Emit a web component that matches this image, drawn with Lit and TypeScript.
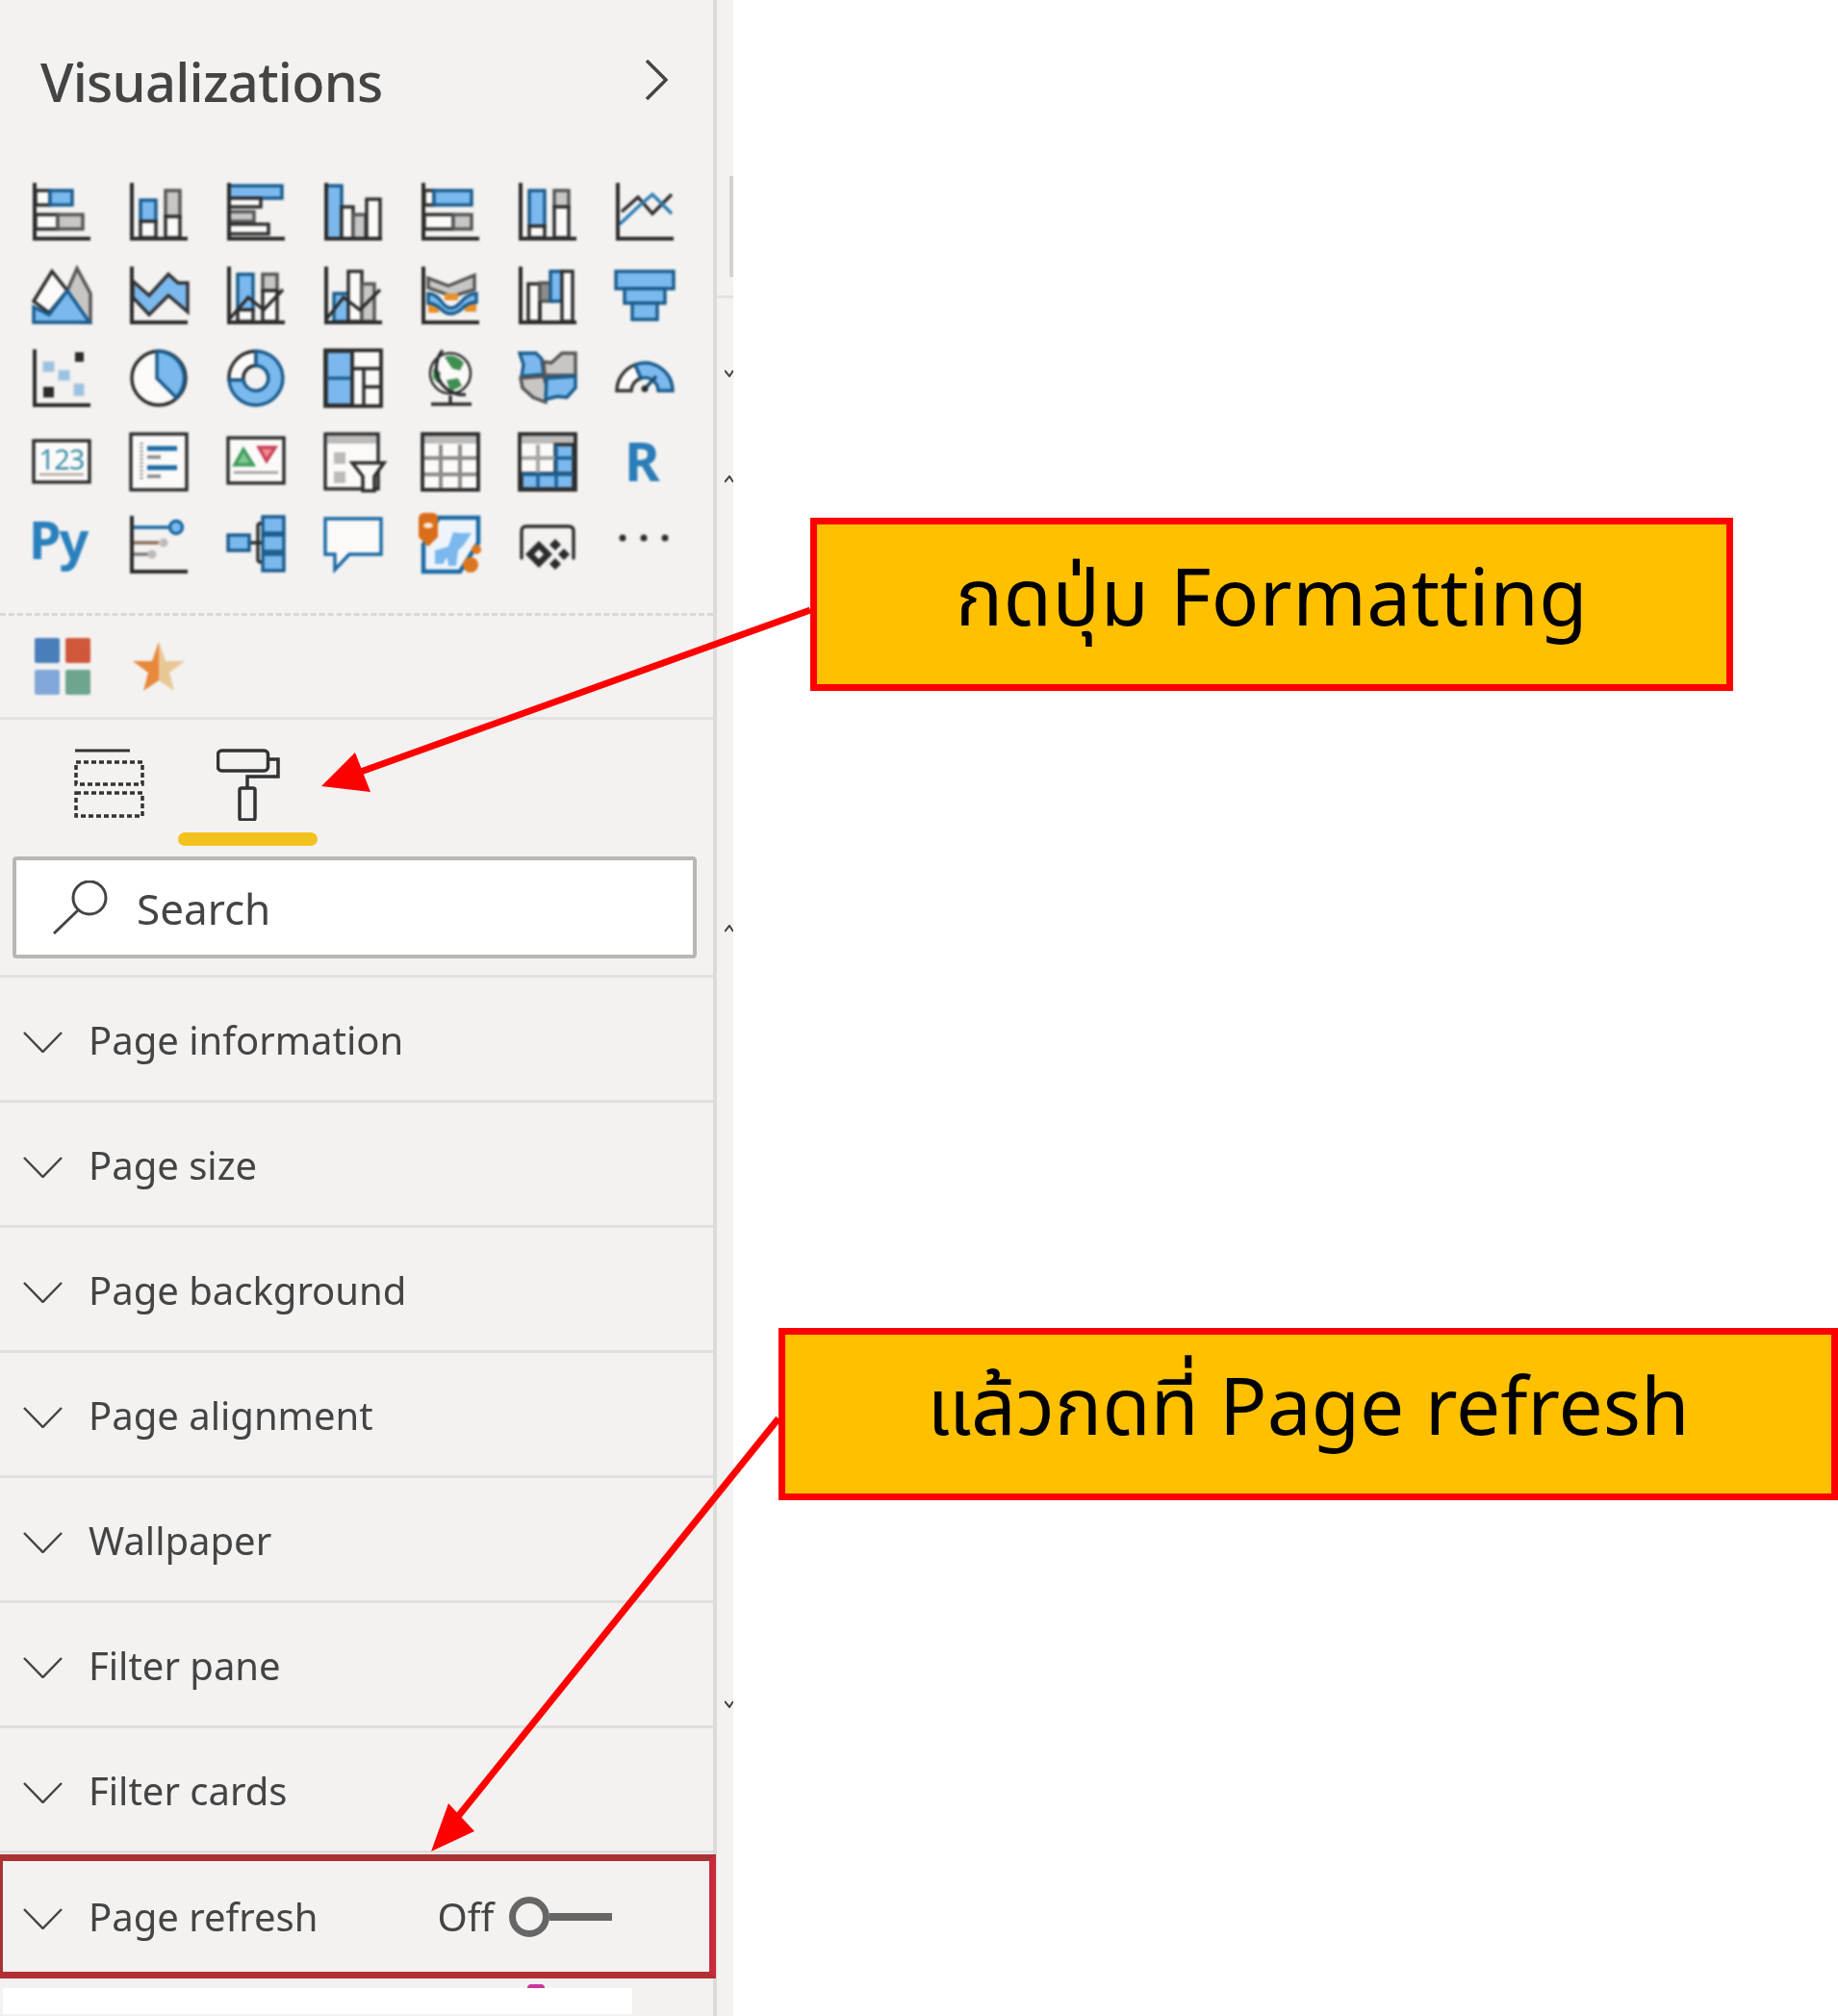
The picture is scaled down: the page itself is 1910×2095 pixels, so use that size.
import { LitElement, html, css, svg } from "lit";
import { customElement } from "lit/decorators.js";

const R = (x: number, y: number, w: number, h: number, c = "") => svg`<rect x=${x} y=${y} width=${w} height=${h} class=${c}></rect>`;
const AX = svg`<path class="ax" d="M2 0V58H60"></path>`;

const ICONS = [
  svg`${R(3,8,15,15,"w")}${R(18,8,23,15,"bd")}${R(3,33,23,15,"w")}${R(26,33,26,15,"g")}${AX}`,
  svg`${R(11,18,16,22,"bd")}${R(11,40,16,17,"w")}${R(37,8,15,27,"g")}${R(37,35,15,22,"w")}${AX}`,
  svg`${R(2,3,55,13,"bd")}${R(2,16,33,9,"w")}${R(2,30,26,10,"g")}${R(2,43,41,10,"w")}${AX}`,
  svg`${R(2,3,16,55,"bd")}${R(18,25,12,33,"w")}${R(30,33,13,25,"g")}${R(44,17,14,41,"w")}${AX}`,
  svg`${R(3,8,10,15,"w")}${R(13,8,39,15,"bd")}${R(3,33,30,15,"w")}${R(33,33,19,15,"g")}${AX}`,
  svg`${R(11,8,16,37,"bd")}${R(11,45,16,12,"w")}${R(37,8,15,17,"g")}${R(37,25,15,32,"w")}${AX}`,
  svg`<path class="ax2" d="M6 30L23 15L38 32L58 12"></path><path class="bl2" d="M4 43L23 25L38 12L58 32"></path>${AX}`,

  svg`<path class="g" d="M36 25L46 2L60 28V58H50Z"></path><path class="w" d="M1 36L20 5L36 25L17 48Z"></path><path class="bd" d="M1 42L17 50L36 25L59 58H1Z"></path>`,
  svg`<path class="b" stroke="#333" d="M3 15L20 30L40 8L50 17H60V47L40 30L20 50L3 32Z"></path>${AX}`,
  svg`${R(11,8,16,37,"bd")}${R(11,45,16,12,"w")}${R(37,8,15,17,"g")}${R(37,25,15,32,"w")}<path class="ax2" d="M2 55L22 32L38 45L58 24"></path>${AX}`,
  svg`${R(10,28,16,29,"bd")}${R(25,5,14,52,"w")}${R(39,18,13,39,"g")}<path class="ax2" d="M2 55L20 32L37 45L58 24"></path>${AX}`,
  svg`<path class="g" d="M7 12L28 20L55 9V24L32 31L7 22Z"></path><path fill="#e8902c" stroke="none" d="M7 37H18V48H7ZM45 38H57V47H45ZM24 28H38V35H24Z"></path><path class="bd" d="M7 28Q15 28 22 38Q30 48 40 38Q48 28 57 28V37Q48 37 42 44Q30 54 20 44Q14 38 7 38Z"></path>${AX}`,
  svg`${R(10,18,12,39,"w")}${R(22,17,14,19,"gd")}<path class="bd" d="M33 5H45V36H33Z"></path>${R(45,5,11,52,"w")}<path d="M22 36V57"></path>${AX}`,
  svg`${R(0,5,60,18,"bd")}${R(9,23,42,15,"bd")}${R(17,38,26,17,"bd")}`,

  svg`${R(44,3,9,10,"dk")}${R(11,13,11,10,"bf")}${R(27,22,11,10,"bf")}${R(11,39,11,11,"dk")}${R(43,36,10,12,"bf")}${AX}`,
  svg`<circle class="w" cx="30" cy="30" r="28"></circle><path class="bd" stroke="#333" d="M28 30V2A28 28 0 0 1 48 50Z"></path>`,
  svg`<path class="w" d="M2 32A28 28 0 0 1 30 2V17A13 13 0 0 0 17 32Z"></path><path class="bd" d="M30 2A28 28 0 1 1 2 32H17A13 13 0 1 0 30 17Z"></path>`,
  svg`${R(1,1,58,58,"w")}${R(2,2,27,56,"b")}<path stroke="#1f5f8f" d="M2 30H28"></path><path d="M29 2V58M29 20H58M41 20V58M41 39H58"></path>${R(1,1,58,58)}`,
  svg`<circle class="w" stroke-width="2.5" cx="30" cy="25" r="21"></circle><path fill="#3f8f52" stroke="none" d="M24 8Q34 3 44 14L40 22L32 20ZM12 20L20 24L18 36L12 30ZM26 32L38 30L42 38L30 44Z"></path><path d="M22 1A28 28 0 0 0 46 47M10 57H52M30 48V57"></path>`,
  svg`<path class="bd" d="M1 4H18L24 10L26 26L3 28L5 16Z"></path><path class="g" d="M26 13L34 14L45 4H59V27H27Z"></path><path class="g" d="M2 30L26 28L30 42L28 55L15 50L4 40Z"></path><path class="bd" d="M29 30L59 28V40L50 50L40 49L28 52Z"></path>`,
  svg`<path class="w" stroke="#333" d="M1 43A29 29 0 0 1 20 16L26 30A14 14 0 0 0 16 43Z"></path><path class="bd" d="M20 16A29 29 0 0 1 59 43H44A14 14 0 0 0 26 30Z"></path><path stroke="#1c4e70" d="M42 28L30 41"></path><circle class="dk" cx="30" cy="41" r="3.5"></circle>`,

  svg`${R(1,8,58,43,"w")}<text class="t123" x="30" y="38" text-anchor="middle">123</text><path stroke="#b3a8a0" stroke-width="2.5" d="M7 43H53"></path>`,
  svg`${R(1,1,58,58,"w")}<path stroke="#999" stroke-dasharray="2 2" d="M12 10V50"></path><path stroke="#1b6aa5" stroke-width="5" d="M18 16H49M18 36H49"></path><path stroke="#888" d="M18 25H32M18 45H32"></path>`,
  svg`${R(1,5,58,47,"w")}<path fill="#7fc98f" stroke="#3f9c5a" d="M8 33L17 17L27 33Z"></path><path fill="#f28b8b" stroke="#c9425a" d="M33 15H50L41 29Z"></path><path stroke="#999" stroke-width="2.5" d="M7 41H53"></path>`,
  svg`${R(1,1,55,57,"w")}${R(3,3,51,8,"gf")}${R(10,20,12,12,"gf")}${R(10,40,12,12,"gf")}<path class="w" stroke-width="3.5" d="M29 31H62L52 45V60H40V45Z"></path>`,
  svg`${R(1,1,58,58,"w")}${R(3,3,54,8,"gf")}<path stroke="#8f8d8b" stroke-width="4" d="M3 26H57M3 43H57M20 12V58M40 12V58"></path>${R(1,1,58,58)}`,
  svg`${R(1,1,58,58,"w")}${R(3,3,54,8,"gf")}${R(38,12,19,32,"b")}${R(3,42,54,16,"b")}<path stroke="#a9a7a5" stroke-width="4" d="M3 26H38M20 12V42"></path><path stroke="#1b5f92" d="M38 26H57M3 43H57M20 43V58M39 12V58"></path>${R(1,1,58,58)}`,
  svg`<text class="rtxt" x="9" y="50">R</text>`,

  svg`<text class="py" x="-4" y="45">Py</text>`,
  svg`<path stroke="#1b6aa5" d="M3 12H42"></path><circle class="b" stroke="#1b6aa5" cx="48" cy="12" r="6.5"></circle><path stroke="#8a6b55" d="M3 28H30"></path><circle class="gf" stroke="#8a7a70" cx="35" cy="28" r="4.5"></circle><path stroke="#777" d="M3 40H20"></path><circle class="gf" stroke="#777" cx="23" cy="40" r="4.5"></circle>${AX}`,
  svg`<path d="M22 28H32M32 8V48M32 8H38M32 28H38M32 48H38"></path>${R(1,20,22,16,"bd")}${R(37,1,22,17,"bd")}${R(37,20,22,17,"bd")}${R(37,40,22,17,"bd")}`,
  svg`<path fill="#fbfaf9" stroke="#1b6aa5" d="M1 3H59V40H26L11 56V40H1Z"></path>`,
  svg`<path fill="#eef4fa" stroke="#1b6aa5" stroke-width="4.5" d="M18 2H59V28L40 58H2V30Z"></path><path class="b" stroke="none" d="M33 17L40 18L52 18L44 30L38 36L36 52H28L27 44Q24 44 23 50H14V36L28 32Z"></path><path fill="#d96d1a" stroke="none" d="M-3 3Q-3 -3 3 -3H11Q17 -3 17 3V22L7 32L-3 22Z"></path><ellipse fill="#fbe6d6" stroke="none" cx="7" cy="10" rx="5" ry="3"></ellipse><circle fill="#d9761f" stroke="none" cx="57" cy="35" r="5"></circle><circle fill="#d9761f" stroke="none" cx="51" cy="51" r="8"></circle>`,
  svg`<path stroke-linecap="round" d="M3 44V16Q3 11 8 11H52Q57 11 57 16V44"></path><path class="dk" stroke="none" d="M21 26L35 40L21 54L7 40ZM38 24L44 30L38 36L32 30ZM47 34L53 40L47 46L41 40ZM38 44L44 50L38 56L32 50Z"></path><path fill="#f3f2f1" stroke="none" d="M21 35L26 40L21 45L16 40Z"></path>`,
  svg`<circle class="dk" stroke="none" cx="7" cy="23" r="3.5"></circle><circle class="dk" stroke="none" cx="29" cy="23" r="3.5"></circle><circle class="dk" stroke="none" cx="51" cy="23" r="3.5"></circle>`,
];

const ROWS = ["Page information", "Page size", "Page background", "Page alignment", "Wallpaper", "Filter pane", "Filter cards"];
const CHEV = html`<svg class="chev" viewBox="0 0 41 22"><path d="M1 1L20.5 21L40 1"></path></svg>`;

@customElement("app-root")
export class AppRoot extends LitElement {
  static styles = css`
    :host { display: block; width: 1910px; height: 2095px; position: relative; overflow: hidden; background: #fff; font-family: "Noto Sans", "Open Sans", sans-serif; color: #444; }
    .page { display: flex; height: 2095px; }
    .panel { width: 741px; flex: none; background: #f3f2f1; height: 2095px; }
    .divider { width: 4px; flex: none; background: #dddbd9; }
    .strip { width: 17px; flex: none; background: #f3f2f1; display: flex; flex-direction: column; align-items: flex-end; }
    .slider { width: 4px; height: 105px; margin-top: 183px; background: #d4d2d0; }
    .hr { width: 17px; height: 3px; margin-top: 19px; background: #e4e2e0; }
    .mini { width: 9px; height: 8px; fill: none; stroke: #444; stroke-width: 2; }
    .m1 { margin-top: 74px; } .m2 { margin-top: 102px; } .m3 { margin-top: 459px; } .m4 { margin-top: 798px; }

    .head { height: 190px; display: flex; align-items: center; justify-content: space-between; padding: 0 47px 22px 42px; box-sizing: border-box; }
    .title { font-size: 56px; font-weight: 500; letter-spacing: -0.75px; color: #444; filter: blur(0.5px); }
    .close { width: 24px; height: 42px; margin-top: -2px; fill: none; stroke: #444; stroke-width: 3.5; }

    .grid { display: grid; grid-template-columns: repeat(7, 60px); column-gap: 41px; row-gap: 26.5px; padding-left: 34px; filter: blur(0.8px); }
    .ic { width: 60px; height: 60px; overflow: visible; fill: none; stroke: #2c2c2c; stroke-width: 3.4; display: block; }
    .ic .ax { stroke: #2c2c2c; stroke-width: 4; fill: none; }
    .ic .ax2 { stroke: #2c2c2c; fill: none; }
    .ic .bl2 { stroke: #2b7cb3; fill: none; }
    .ic .w { fill: #fbfaf9; }
    .ic .b { fill: #7ab8ee; }
    .ic .bf { fill: #9cc2e2; stroke: #a9c4dc; stroke-width: 1; }
    .ic .bd { fill: #7ab8ee; stroke: #1a5c8c; }
    .ic .g { fill: #c8c6c4; stroke: #555; }
    .ic .gf { fill: #bdbbb9; stroke: none; }
    .ic .gd { fill: #8f8d8b; stroke: #555; }
    .ic .dk { fill: #2c2c2c; stroke: none; }
    .t123 { font-size: 29px; font-family: "Noto Sans", sans-serif; fill: #3f8fa8; stroke: none; letter-spacing: -1px; }
    .rtxt { font-size: 56px; font-weight: 700; font-family: "Noto Sans", sans-serif; fill: #2a7db8; stroke: none; }
    .py { font-size: 54px; font-weight: 700; font-family: "Noto Sans", sans-serif; fill: #2a80bd; stroke: none; letter-spacing: -2px; }

    .dash { margin-top: 41px; border-top: 3px dashed #dad8d6; }
    .custom { display: flex; align-items: flex-start; height: 108px; padding: 23px 0 0 36px; box-sizing: border-box; border-bottom: 3px solid #e4e2e0; gap: 44px; }
    .swatches { display: grid; grid-template-columns: 26px 26px; gap: 7px 6px; filter: blur(1px); }
    .swatches i { display: block; height: 26px; border-radius: 2px; }
    .s1 { background: #4a7ebb; } .s2 { background: #d0573a; } .s3 { background: #80a8d8; } .s4 { background: #6ea58e; }
    .star { width: 54px; height: 52px; margin-top: 4px; filter: blur(1px); }

    .tabs { height: 142px; display: flex; padding: 30px 0 0 77px; box-sizing: border-box; gap: 75px; }
    .tab { display: block; fill: none; stroke: #333; }
    .t1 { width: 73px; height: 72px; }
    .rollwrap { display: flex; flex-direction: column; align-items: center; width: 145px; margin-left: -40px; }
    .t2 { width: 66px; height: 75px; }
    .bar { width: 145px; height: 14px; border-radius: 7px; background: #f2c31f; margin-top: 12px; }

    .search { margin-left: 13px; width: 711px; height: 106px; box-sizing: border-box; background: #fff; border: 4px solid #b9b7b5; border-radius: 4px; display: flex; align-items: center; gap: 29px; padding: 2px 0 0 38px; font-size: 44px; color: #444; }
    .search svg { width: 58px; height: 56px; margin-top: -2px; fill: none; stroke: #444; stroke-width: 3; flex: none; }
    .search span { filter: blur(0.5px); }
    .sep { height: 3px; margin-top: 17px; background: #e4e2e0; }

    .row { height: 130px; box-sizing: border-box; border-bottom: 3px solid #e1dfdd; display: flex; align-items: center; gap: 27px; padding: 2px 0 0 24px; font-size: 40px; color: #444; }
    .row span, .redrow span { filter: blur(0.5px); }
    .chev { width: 41px; height: 22px; fill: none; stroke: #444; stroke-width: 2.5; flex: none; margin-top: 4px; }
    .redrow { height: 129px; margin-top: 1px; margin-left: -4px; width: 748px; position: relative; border: 7px solid #ab3234; border-color: #ab3234 #c92a3a #b23034 #ab3234; box-sizing: border-box; display: flex; align-items: center; gap: 27px; padding-left: 21px; font-size: 40px; color: #444; }
    .off { margin-left: 97px; margin-right: -11px; }
    .toggle { display: flex; align-items: center; width: 107px; }
    .knob { width: 42px; height: 42px; box-sizing: border-box; border: 7px solid #666; border-radius: 50%; flex: none; }
    .line { flex: 1; height: 8px; background: #666; }
    .white { margin: 10px 0 0 3px; width: 654px; height: 27px; background: #fff; position: relative; }
    .blob { position: absolute; left: 545px; top: -4px; width: 18px; height: 4px; border-radius: 9px 9px 0 0; background: #c8389a; }

    .note { position: absolute; box-sizing: border-box; background: #ffc000; border: 7px solid #ff0000; color: #000; display: flex; justify-content: center; align-items: center; padding-bottom: 8px; font-size: 82px; font-family: "Noto Sans", "Noto Sans Thai", "DejaVu Sans", sans-serif; white-space: nowrap; }
    .n1 { left: 842px; top: 538px; width: 959px; height: 180px; letter-spacing: 0.4px; }
    .n2 { left: 809px; top: 1380px; width: 1101px; height: 179px; }
    .arrows { position: absolute; left: 0; top: 0; width: 1910px; height: 2095px; pointer-events: none; }
  `;

  render() {
    return html`
      <div class="page">
        <div class="panel">
          <div class="head">
            <div class="title">Visualizations</div>
            <svg class="close" viewBox="0 0 24 42"><path d="M2 1L22 21L2 41"></path></svg>
          </div>
          <div class="grid">
            ${ICONS.map((i) => html`<svg class="ic" viewBox="0 0 60 60">${i}</svg>`)}
          </div>
          <div class="dash"></div>
          <div class="custom">
            <div class="swatches"><i class="s1"></i><i class="s2"></i><i class="s3"></i><i class="s4"></i></div>
            <svg class="star" viewBox="0 0 54 52"><path fill="#e8883a" d="M27 0V40L11 51L16 32L0 20H20Z"></path><path fill="#e9c795" d="M27 0L34 20H54L38 32L43 51L27 40Z"></path></svg>
          </div>
          <div class="tabs">
            <svg class="tab t1" viewBox="0 0 73 72"><path stroke-width="3" d="M1 2H58"></path><path stroke-width="3.5" stroke-dasharray="5 3" d="M2 14H71V37H2ZM2 46H71V70H2Z"></path></svg>
            <div class="rollwrap">
              <svg class="tab t2" viewBox="0 0 66 75"><rect x="1.5" y="2" width="52" height="21" rx="4" stroke-width="3.5"></rect><path stroke-width="3.5" d="M54 11H64V29H32V40"></path><rect x="24" y="41" width="16" height="33" rx="2" stroke-width="3.5"></rect></svg>
              <div class="bar"></div>
            </div>
          </div>
          <div class="search">
            <svg viewBox="0 0 58 56"><circle cx="38" cy="18" r="17"></circle><path d="M26 31L1 55"></path></svg>
            <span>Search</span>
          </div>
          <div class="sep"></div>
          ${ROWS.map((r) => html`<div class="row">${CHEV}<span>${r}</span></div>`)}
          <div class="redrow">
            ${CHEV}<span>Page refresh</span><span class="off">Off</span>
            <div class="toggle"><div class="knob"></div><div class="line"></div></div>
          </div>
          <div class="white"><div class="blob"></div></div>
        </div>
        <div class="divider"></div>
        <div class="strip">
          <div class="slider"></div>
          <div class="hr"></div>
          <svg class="mini m1" viewBox="0 0 9 8"><path d="M0 1L5 7L9 1"></path></svg>
          <svg class="mini m2" viewBox="0 0 9 8"><path d="M0 7L5 1L9 7"></path></svg>
          <svg class="mini m3" viewBox="0 0 9 8"><path d="M0 7L5 1L9 7"></path></svg>
          <svg class="mini m4" viewBox="0 0 9 8"><path d="M0 1L5 7L9 1"></path></svg>
        </div>
      </div>
      <div class="note n1">กดปุ่ม Formatting</div>
      <div class="note n2">แล้วกดที่ Page refresh</div>
      <svg class="arrows" viewBox="0 0 1910 2095">
        <path d="M842 634L372 803" stroke="#f00" stroke-width="7" fill="none"></path>
        <path d="M334 817L369 782L385 823Z" fill="#f00"></path>
        <path d="M809 1474L474 1890" stroke="#f00" stroke-width="7" fill="none"></path>
        <path d="M448 1924L466 1874L493 1903Z" fill="#f00"></path>
      </svg>
    `;
  }
}
